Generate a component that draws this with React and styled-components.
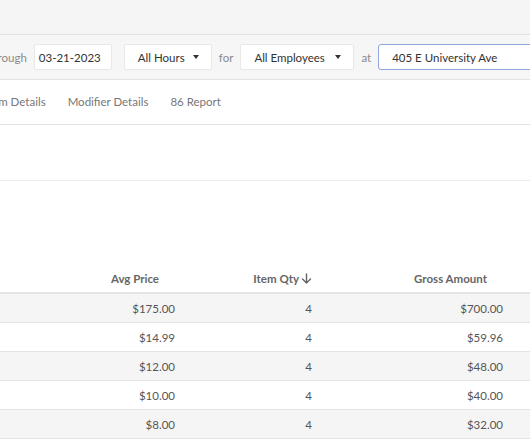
import React from "react";
import styled, { createGlobalStyle } from "styled-components";

const Global = createGlobalStyle`
  html, body { margin: 0; padding: 0; background: #fff; }
  body { font-family: Lato, "Noto Sans", Arial, sans-serif; overflow: hidden; width: 530px; height: 442px; }
  * { box-sizing: border-box; }
`;

const Page = styled.div`
  width: 530px;
  height: 442px;
  overflow: hidden;
  display: flex;
  flex-direction: column;
`;

const TopBand = styled.div`
  height: 35px;
  flex: none;
  background: #f5f5f5;
  border-bottom: 1px solid #e2e2e2;
`;

const Toolbar = styled.div`
  height: 45px;
  flex: none;
  background: #f6f6f6;
  border-bottom: 1px solid #e2e2e2;
  display: flex;
  align-items: center;
  gap: 6px;
  margin-left: -14px;
  white-space: nowrap;
`;

const Label = styled.span`
  font-size: 11.5px;
  color: #8a8a8a;
  padding: 0 1px;
`;

const Field = styled.div`
  height: 26px;
  flex: none;
  width: ${(p) => p.$w}px;
  background: #fff;
  border: 1px solid ${(p) => (p.$active ? "#8fa7dc" : "#e8e8e8")};
  border-radius: ${(p) => (p.$active ? 3 : 2)}px;
  display: flex;
  align-items: center;
  justify-content: ${(p) => (p.$select ? "space-between" : "flex-start")};
  padding: 0 ${(p) => (p.$select ? 12 : 4)}px 0 ${(p) => p.$pl ?? 4}px;
  font-size: 11.5px;
  color: #333;
  margin-left: ${(p) => p.$ml ?? 0}px;
`;

const Caret = styled.span`
  width: 0;
  height: 0;
  border-left: 3px solid transparent;
  border-right: 3px solid transparent;
  border-top: 4px solid #333;
`;

const Tabs = styled.div`
  height: 45px;
  flex: none;
  border-bottom: 1px solid #e2e2e2;
  display: flex;
  align-items: center;
  gap: 22px;
  margin-left: -15px;
  padding-bottom: 2px;
  white-space: nowrap;
`;

const Tab = styled.span`
  font-size: 11.5px;
  color: #777;
`;

const Blank = styled.div`
  height: 56px;
  flex: none;
  border-bottom: 1px solid #ececec;
`;

const Spacer = styled.div`
  height: 84px;
  flex: none;
`;

const Row = styled.div`
  display: grid;
  grid-template-columns: 191px 137px 191px 1fr;
  height: 29px;
  flex: none;
  background: ${(p) => (p.$alt ? "#f5f5f5" : "#fff")};
  border-bottom: ${(p) => (p.$head ? "2px solid #e4e4e4" : "1px solid #e3e3e3")};
  align-items: center;
`;

const Cell = styled.div`
  text-align: right;
  padding-right: ${(p) => (p.$pad ? 32 : 16)}px;
  font-size: 11.5px;
  font-weight: ${(p) => (p.$head ? 700 : 400)};
  color: ${(p) => (p.$head ? "#666" : "#555")};
  white-space: nowrap;
  display: flex;
  justify-content: flex-end;
  align-items: center;
  gap: 2px;
`;

const Arrow = () => (
  <svg width="11" height="11" viewBox="0 0 11 11" fill="none" stroke="#666" strokeWidth="1.4" strokeLinecap="round" strokeLinejoin="round">
    <path d="M5.5 1v9M1.5 6l4 4 4-4" />
  </svg>
);

const rows = [
  ["$175.00", "4", "$700.00"],
  ["$14.99", "4", "$59.96"],
  ["$12.00", "4", "$48.00"],
  ["$10.00", "4", "$40.00"],
  ["$8.00", "4", "$32.00"],
];

export default function App() {
  return (
    <>
      <Global />
      <Page>
        <TopBand />
        <Toolbar>
          <Label>through</Label>
          <Field $w={78}>03-21-2023</Field>
          <Field $w={88} $select $pl={13} $ml={6}>
            All Hours <Caret />
          </Field>
          <Label>for</Label>
          <Field $w={114} $select $pl={13}>
            All Employees <Caret />
          </Field>
          <Label>at</Label>
          <Field $w={200} $active $pl={13}>405 E University Ave</Field>
        </Toolbar>
        <Tabs>
          <Tab>Item Details</Tab>
          <Tab>Modifier Details</Tab>
          <Tab>86 Report</Tab>
        </Tabs>
        <Blank />
        <Spacer />
        <Row $head>
          <Cell $head $pad>Avg Price</Cell>
          <Cell $head>
            Item Qty <Arrow />
          </Cell>
          <Cell $head $pad>Gross Amount</Cell>
          <Cell $head />
        </Row>
        {rows.map((r, i) => (
          <Row key={i} $alt={i % 2 === 0}>
            <Cell>{r[0]}</Cell>
            <Cell>{r[1]}</Cell>
            <Cell>{r[2]}</Cell>
            <Cell />
          </Row>
        ))}
      </Page>
    </>
  );
}
